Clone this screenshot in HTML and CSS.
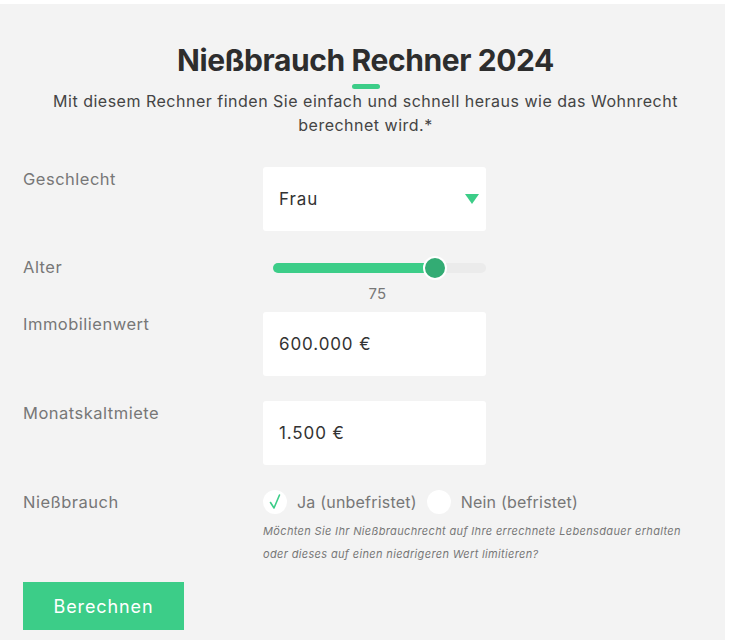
FILE: index.html
```html
<!DOCTYPE html>
<html lang="de">
<head>
<meta charset="utf-8">
<title>Nießbrauch Rechner 2024</title>
<link rel="stylesheet" href="styles.css">
</head>
<body>

<div class="panel">
	<h1 class="title">Nießbrauch Rechner 2024</h1>
	<div class="title-bar"></div>
	<p class="intro">Mit diesem Rechner finden Sie einfach und schnell heraus wie das Wohnrecht berechnet wird.*</p>

	<form class="calc" onsubmit="return false">
		<div class="row row-select">
			<label class="label">Geschlecht</label>
			<div class="field select">
				<span>Frau</span>
				<svg class="arrow" width="14" height="10" viewBox="0 0 14 10"><path d="M0 0H14L7 10Z" fill="#3ccd88"/></svg>
			</div>
		</div>

		<div class="row row-slider">
			<label class="label">Alter</label>
			<div class="slider-wrap">
				<div class="track">
					<div class="fill" style="width: 76%"></div>
					<div class="thumb" style="left: 76%"></div>
				</div>
				<div class="slider-value">75</div>
			</div>
		</div>

		<div class="row row-input">
			<label class="label">Immobilienwert</label>
			<div class="field">600.000 €</div>
		</div>

		<div class="row row-input">
			<label class="label">Monatskaltmiete</label>
			<div class="field">1.500 €</div>
		</div>

		<div class="row row-radio">
			<label class="label">Nießbrauch</label>
			<div class="radio-wrap">
				<div class="radios">
					<span class="radio"><svg width="24" height="24" viewBox="0 0 24 24"><path d="M7.5 12.5L11 18L16.5 5" fill="none" stroke="#3ccd88" stroke-width="1.6" stroke-linecap="round" stroke-linejoin="round"/></svg></span>
					<span class="radio-text">Ja (unbefristet)</span>
					<span class="radio"></span>
					<span class="radio-text">Nein (befristet)</span>
				</div>
				<p class="hint">Möchten Sie Ihr Nießbrauchrecht auf Ihre errechnete Lebensdauer erhalten oder dieses auf einen niedrigeren Wert limitieren?</p>
			</div>
		</div>

		<button type="submit" class="submit">Berechnen</button>
	</form>
</div>

</body>
</html>
```

FILE: styles.css
```css
html, body {
	margin: 0;
	padding: 0;
	background: #fff;
}

body {
	font-family: Inter, "Open Sans", sans-serif;
	color: #333;
}

.panel {
	margin-top: 4px;
	width: 725px;
	height: 636px;
	background: #f3f3f3;
	padding: 0 17px 0 23px;
	box-sizing: border-box;
	overflow: hidden;
}

.title {
	margin: 0;
	padding-top: 38px;
	font-size: 30px;
	line-height: 36px;
	font-weight: 700;
	text-align: center;
	color: #2d2d2d;
	letter-spacing: -0.4px;
}

.title-bar {
	width: 28px;
	height: 5px;
	border-radius: 3px;
	background: #3ccd88;
	margin: 6px auto 0;
}

.intro {
	margin: 0 auto;
	width: 660px;
	font-size: 16px;
	line-height: 24px;
	letter-spacing: 0.5px;
	text-align: center;
	color: #444;
}

.calc {
	margin-top: 30px;
}

.row {
	display: flex;
	align-items: flex-start;
}

.label {
	width: 240px;
	flex: none;
	font-size: 16.5px;
	line-height: 22px;
	letter-spacing: 0.5px;
	color: #777;
	padding-top: 1px;
}

.field {
	width: 223px;
	height: 64px;
	box-sizing: border-box;
	background: #fff;
	border-radius: 3px;
	padding: 0 7px 0 16px;
	display: flex;
	align-items: center;
	font-size: 17px;
	letter-spacing: 0.9px;
	color: #333;
}

.select {
	justify-content: space-between;
}

.arrow {
	display: block;
}

.row-select {
	margin-bottom: 25px;
}

.row-slider {
	height: 56px;
}

.row-slider .label {
	padding-top: 0;
}

.slider-wrap {
	width: 213px;
	margin-left: 10px;
}

.track {
	position: relative;
	height: 10px;
	margin-top: 7px;
	border-radius: 5px;
	background: #ebebeb;
}

.fill {
	height: 10px;
	border-radius: 5px;
	background: #3ccd88;
}

.thumb {
	position: absolute;
	top: -7px;
	width: 20px;
	height: 20px;
	margin-left: -12px;
	border: 2px solid #fff;
	border-radius: 50%;
	background: #33ac74;
}

.slider-value {
	text-align: center;
	margin-top: 11px;
	font-size: 15px;
	letter-spacing: 0.3px;
	color: #777;
	padding-right: 4px;
}

.row-input {
	margin-bottom: 25px;
}

.radios {
	display: flex;
	align-items: center;
	height: 24px;
	font-size: 16px;
	letter-spacing: 0.2px;
	color: #777;
}

.radio {
	width: 24px;
	height: 24px;
	border-radius: 50%;
	background: #fff;
	flex: none;
}

.radio svg {
	display: block;
}

.radio-text {
	margin: 0 10px 0 10px;
}

.hint {
	margin: 6px 0 0;
	font-size: 11px;
	font-style: italic;
	line-height: 23px;
	letter-spacing: 0.35px;
	color: #777;
	width: 440px;
}

.submit {
	display: block;
	margin-top: 16px;
	width: 161px;
	height: 48px;
	border: 0;
	border-radius: 0;
	background: #3ccd88;
	color: #fff;
	font-family: inherit;
	font-size: 18px;
	letter-spacing: 0.9px;
	cursor: pointer;
}
```
